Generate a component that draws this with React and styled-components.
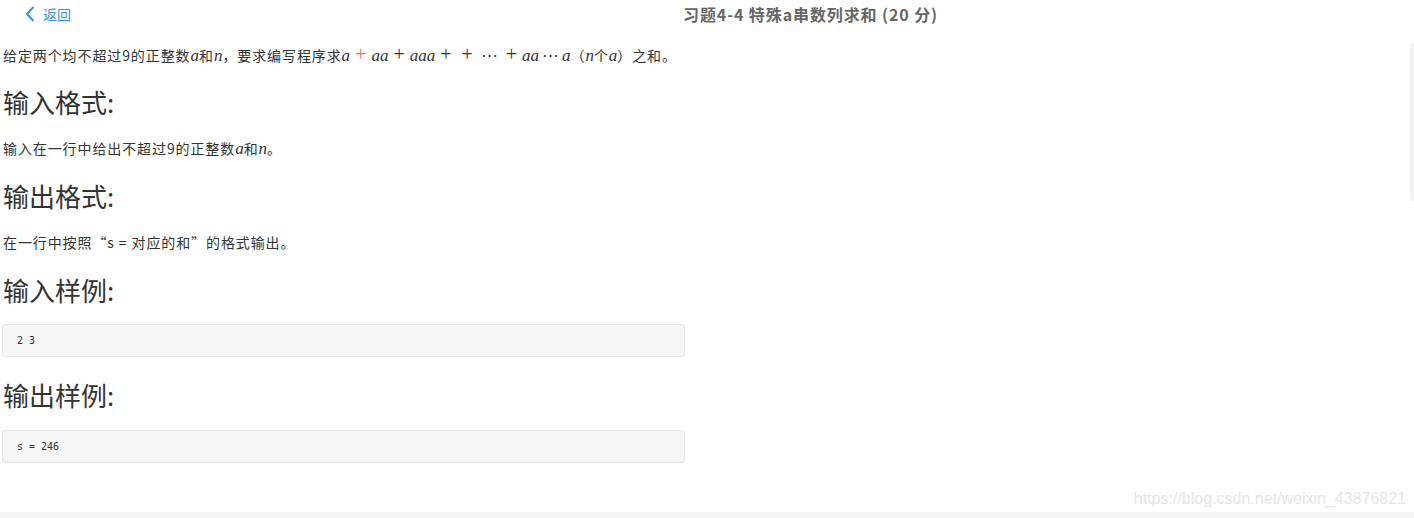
import styled, { createGlobalStyle } from 'styled-components'

const GlobalStyle = createGlobalStyle`
  html, body {
    margin: 0;
    padding: 0;
    background: #fff;
  }
  body {
    font-family: 'Noto Sans CJK SC', 'Noto Sans', sans-serif;
    color: #333;
  }
`

const Page = styled.div`
  position: relative;
  width: 1414px;
  height: 518px;
  overflow: hidden;
  display: flex;
  flex-direction: column;
`

const Header = styled.div`
  height: 28px;
  display: flex;
  align-items: center;
`

const Back = styled.a`
  display: flex;
  align-items: center;
  gap: 8px;
  padding-left: 25px;
  color: #3a8ee6;
  font-size: 14px;
  text-decoration: none;
  svg {
    display: block;
  }
`

const Title = styled.h1`
  margin: 0 0 0 612px;
  font-size: 16px;
  font-weight: 700;
  letter-spacing: 0.9px;
  color: #666;
  white-space: nowrap;
`

const Content = styled.div`
  flex: 1;
  padding: 16px 0 0 3px;
`

const Para = styled.p`
  margin: 0;
  height: 20px;
  font-size: 14px;
  letter-spacing: 0.9px;
  line-height: 20px;
  color: #333;
  white-space: nowrap;
`

const Heading = styled.h2`
  margin: ${(p) => p.$top}px 0 ${(p) => p.$bottom}px;
  height: 32px;
  font-size: 26px;
  font-weight: 400;
  line-height: 32px;
  color: #333;
`

const M = styled.span`
  font-family: 'Liberation Serif', 'DejaVu Serif', serif;
  font-style: ${(p) => (p.$up ? 'normal' : 'italic')};
  font-size: ${(p) => (p.$op ? 20 : 17)}px;
  line-height: 1;
  letter-spacing: 0;
  color: ${(p) => p.$color || '#333'};
  padding: ${(p) => (p.$op ? '0 5px' : p.$pad ? '0 3px' : '0')};
`

const Code = styled.pre`
  margin: 0;
  width: 683px;
  height: 33px;
  box-sizing: border-box;
  display: flex;
  align-items: center;
  padding: 0 0 0 14px;
  margin-left: -1px;
  background: #f6f6f6;
  border: 1px solid #e6e6e6;
  border-radius: 3px;
  font-family: 'DejaVu Sans Mono', 'Liberation Mono', monospace;
  font-size: 10px;
  color: #333;
`

const Footer = styled.div`
  height: 6px;
  background: #f3f3f3;
`

const Watermark = styled.span`
  position: absolute;
  right: 8px;
  bottom: 10px;
  font-family: 'Liberation Sans', Arial, sans-serif;
  font-size: 16px;
  color: #e6e6e6;
`

const Thumb = styled.div`
  position: absolute;
  right: 0;
  top: 43px;
  width: 4px;
  height: 158px;
  border-radius: 3px 0 0 3px;
  background: #f3f3f3;
`

const Chevron = () => (
  <svg width="10" height="16" viewBox="0 0 10 16">
    <path d="M8 1.5 L2 8 L8 14.5" fill="none" stroke="#3a8ee6" strokeWidth="2" strokeLinecap="round" strokeLinejoin="round" />
  </svg>
)

const Plus = ({ color }) => (
  <M $up $op $color={color}>
    +
  </M>
)

const Dots = () => (
  <M $up $pad>
    ⋯
  </M>
)

export default function App() {
  return (
    <Page>
      <GlobalStyle />
      <Header>
        <Back href='#'>
          <Chevron />
          返回
        </Back>
        <Title>习题4-4 特殊a串数列求和 (20 分)</Title>
      </Header>
      <Content>
        <Para>
          给定两个均不超过9的正整数<M>a</M>和<M>n</M>，要求编写程序求<M>a</M>
          <Plus color='#e4785a' />
          <M>aa</M>
          <Plus />
          <M>aaa</M>
          <Plus />
          <Plus />
          <Dots />
          <Plus />
          <M>aa</M>
          <Dots />
          <M>a</M>（<M>n</M>个<M>a</M>）之和。
        </Para>
        <Heading $top={22} $bottom={20}>输入格式:</Heading>
        <Para>
          输入在一行中给出不超过9的正整数<M>a</M>和<M>n</M>。
        </Para>
        <Heading $top={22} $bottom={20}>输出格式:</Heading>
        <Para>在一行中按照“s = 对应的和”的格式输出。</Para>
        <Heading $top={22} $bottom={18}>输入样例:</Heading>
        <Code>2 3</Code>
        <Heading $top={22} $bottom={19}>输出样例:</Heading>
        <Code>s = 246</Code>
      </Content>
      <Footer />
      <Watermark>https://blog.csdn.net/weixin_43876821</Watermark>
      <Thumb />
    </Page>
  )
}
